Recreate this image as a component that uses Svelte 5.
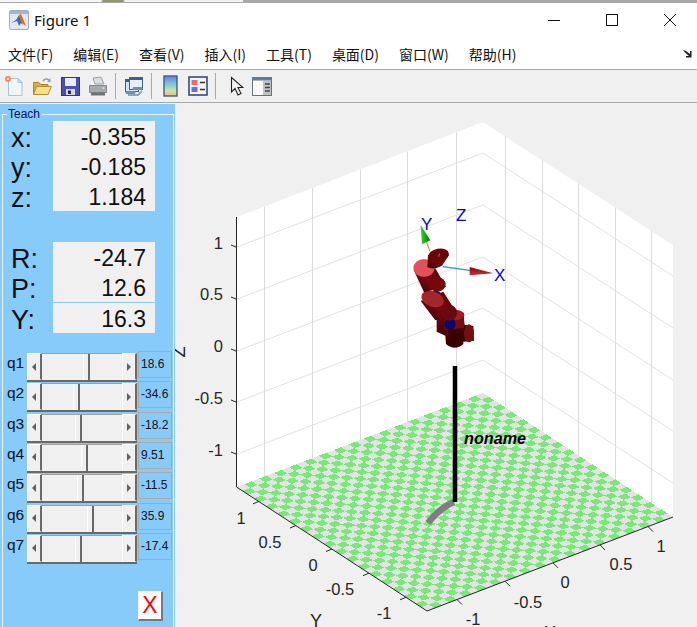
<script>
  const menus = ["文件(F)", "编辑(E)", "查看(V)", "插入(I)", "工具(T)", "桌面(D)", "窗口(W)", "帮助(H)"];

  const position = [
    [["x:", "-0.355"], ["y:", "-0.185"], ["z:", "1.184"]],
    [["R:", "-24.7"], ["P:", "12.6"], ["Y:", "16.3"]],
  ];

  const joints = [
    { name: "q1", value: "18.6", thumb: 41 },
    { name: "q2", value: "-34.6", thumb: 31 },
    { name: "q3", value: "-18.2", thumb: 33 },
    { name: "q4", value: "9.51", thumb: 39 },
    { name: "q5", value: "-11.5", thumb: 35 },
    { name: "q6", value: "35.9", thumb: 45 },
    { name: "q7", value: "-17.4", thumb: 33 },
  ];

  // floor corners, in page pixels
  const back = [483, 393];
  const u = [190, 124];
  const v = [-246, 94];
  const tilesPerSide = 33;

  function floorPoint(i, j) {
    const a = i / tilesPerSide;
    const b = j / tilesPerSide;
    return `${back[0] + u[0] * a + v[0] * b},${back[1] + u[1] * a + v[1] * b}`;
  }

  const greenTiles = [];
  for (let i = 0; i < tilesPerSide; i++) {
    for (let j = 0; j < tilesPerSide; j++) {
      if ((i + j) % 2 === 1) {
        greenTiles.push(
          [floorPoint(i, j), floorPoint(i + 1, j), floorPoint(i + 1, j + 1), floorPoint(i, j + 1)].join(" ")
        );
      }
    }
  }

  const zGrid = [247, 299, 351, 402, 454];
  const xGrid = [264, 312, 360, 407, 456];
  const yGrid = [505, 542, 578, 615, 651];
  const xTicks = [457, 505, 553, 600, 648];
  const yTicks = [259, 296, 332, 369, 406];

  const frontRightEdge = (x) => 611 - ((x - 427) * 94) / 246;
  const frontLeftEdge = (x) => 487 + ((x - 237) * 124) / 190;

  const zLabels = [["1", 249], ["0.5", 300], ["0", 352], ["-0.5", 404], ["-1", 456]];
  const yLabels = [["1", 241, 524], ["0.5", 270, 548], ["0", 313, 571], ["-0.5", 340, 595], ["-1", 384, 619]];
  const xLabels = [["1", 661, 552], ["0.5", 621, 570], ["0", 565, 588], ["-0.5", 528, 608], ["-1", 473, 625]];
</script>

<div class="window">
  <div class="strip"></div>

  <header class="titlebar">
    <svg class="logo" viewBox="0 0 20 20" aria-hidden="true">
      <rect x="0.5" y="0.5" width="19" height="19" rx="1.5" fill="#e4e8ee" stroke="#a8acb2" />
      <rect x="1" y="1" width="18" height="3" fill="#9db5d6" />
      <path d="M2 13 L7 10 L10 5 L14 15 L12 13 L10 16 L8 11 Z" fill="#3a6fb5" />
      <path d="M10 5 L12 4 L17 16 L14 14 L12 11 Z" fill="#e8641e" />
    </svg>
    <span class="title">Figure 1</span>
    <div class="window-buttons">
      <svg width="12" height="12" viewBox="0 0 12 12" aria-hidden="true"><path d="M0 6.5H12" stroke="#111" /></svg>
      <svg width="12" height="12" viewBox="0 0 12 12" aria-hidden="true"><rect x="0.5" y="0.5" width="11" height="11" fill="none" stroke="#111" /></svg>
      <svg width="12" height="12" viewBox="0 0 12 12" aria-hidden="true"><path d="M0 0L12 12M12 0L0 12" stroke="#111" /></svg>
    </div>
  </header>

  <nav class="menubar">
    {#each menus as item}
      <span>{item}</span>
    {/each}
    <svg class="dock" width="9" height="8" viewBox="0 0 9 8" aria-hidden="true">
      <path d="M0 0L3 1L7 4V1L8.5 1V7.5H3L3 6H6L2 2.5Z" fill="#222" />
    </svg>
  </nav>

  <div class="toolbar">
    <svg class="tool" viewBox="0 0 20 22" aria-hidden="true">
      <path d="M4.5 3.5H14L18 7.5V20.5H4.5Z" fill="#eef5fb" stroke="#a9c3d8" />
      <path d="M14 3.5V7.5H18Z" fill="#cfe0ee" stroke="#a9c3d8" />
      <circle cx="4" cy="4" r="3" fill="#ee8a5a" />
      <circle cx="4" cy="4" r="1.2" fill="#ffd9a8" />
    </svg>
    <svg class="tool" viewBox="0 0 20 22" aria-hidden="true">
      <path d="M1.5 7.5H7L9 9.5H16V19.5H1.5Z" fill="#d9ac3a" stroke="#a98428" />
      <path d="M1.5 19.5L4.5 11.5H19.5L16 19.5Z" fill="#f6df8a" stroke="#b5902f" />
      <path d="M11 6C12.5 3.5 15 3.5 17 5" fill="none" stroke="#8aa0b8" stroke-width="1.5" />
      <path d="M18.5 3V7H15Z" fill="#8aa0b8" />
    </svg>
    <svg class="tool" viewBox="0 0 20 22" aria-hidden="true">
      <rect x="1.5" y="2.5" width="18" height="18" fill="#4650ad" stroke="#2f3585" />
      <rect x="5" y="3" width="11" height="8" fill="#e8ecf6" />
      <rect x="6" y="14" width="9" height="6" fill="#d5d8e0" />
      <rect x="8" y="15.5" width="3" height="3.5" fill="#25285a" />
    </svg>
    <svg class="tool" viewBox="0 0 20 22" aria-hidden="true">
      <path d="M5 3L13 2L16 9H7Z" fill="#d8dde2" stroke="#9ba2a8" />
      <path d="M1.5 10.5H18.5V17.5H1.5Z" fill="#a6aaad" stroke="#85898c" />
      <path d="M3 17.5H17V20.5H3Z" fill="#6f7375" />
      <circle cx="15.5" cy="13" r="1" fill="#ddd" />
    </svg>
    <i class="sep"></i>
    <svg class="tool" viewBox="0 0 20 22" aria-hidden="true">
      <rect x="1.5" y="4.5" width="13" height="12" fill="#d6e2ee" stroke="#3c5f8c" />
      <rect x="1.5" y="4.5" width="13" height="2.5" fill="#3c5f8c" />
      <rect x="5.5" y="2.5" width="13" height="12" fill="#e8eef5" stroke="#3c5f8c" />
      <rect x="5.5" y="2.5" width="13" height="2.5" fill="#3c5f8c" />
      <path d="M3 17.5H10M10 13.5H17" stroke="#6c8fb5" stroke-width="3" stroke-linecap="round" />
      <path d="M4 20H14L18 16" stroke="#8aa5c2" stroke-width="2" fill="none" />
    </svg>
    <i class="sep"></i>
    <svg class="tool narrow" viewBox="0 0 15 22" aria-hidden="true">
      <defs>
        <linearGradient id="bar" x1="0" y1="0" x2="0" y2="1">
          <stop offset="0" stop-color="#6d7fd8" />
          <stop offset="0.45" stop-color="#7fd0d8" />
          <stop offset="0.75" stop-color="#cfe69a" />
          <stop offset="1" stop-color="#f0b56c" />
        </linearGradient>
      </defs>
      <rect x="1" y="1" width="13" height="20" fill="url(#bar)" stroke="#3f5f86" stroke-width="1.4" />
    </svg>
    <svg class="tool" viewBox="0 0 20 22" aria-hidden="true">
      <rect x="1" y="2" width="18" height="18" fill="#f2f4f8" stroke="#2f4e7a" stroke-width="1.6" />
      <rect x="3.5" y="5" width="6" height="5" fill="#ee6a6e" />
      <rect x="3.5" y="12" width="6" height="5" fill="#6a6af0" />
      <path d="M12 7.5H17M12 14.5H17" stroke="#333" stroke-width="1.4" />
    </svg>
    <i class="sep"></i>
    <svg class="tool pointer" viewBox="0 0 14 22" aria-hidden="true">
      <path d="M1.5 2.5V17L5 13.5L8 20L11 18.5L8 12.5H13Z" fill="#f4f4f4" stroke="#222" stroke-width="1.1" />
    </svg>
    <svg class="tool" viewBox="0 0 20 22" aria-hidden="true">
      <rect x="0.5" y="2.5" width="19" height="18" fill="#ecedee" stroke="#6a7278" />
      <rect x="0.5" y="2.5" width="19" height="3" fill="#5f7f9c" />
      <rect x="1" y="6" width="10" height="14" fill="#fafafa" />
      <rect x="11" y="6" width="8" height="14" fill="#bfc2c4" />
      <path d="M13 9H18M13 12.5H18M13 16H18" stroke="#444" stroke-width="1.4" />
    </svg>
  </div>

  <main class="figure">
    <aside class="side">
      <fieldset class="teach">
        <legend>Teach</legend>

        {#each position as group}
          <div class="readout">
            {#each group as [label, val]}
              <div class="readout-row">
                <span class="readout-label">{label}</span>
                <span class="readout-value">{val}</span>
              </div>
            {/each}
          </div>
        {/each}

        <div class="joints">
          {#each joints as joint}
            <div class="joint">
              <span class="joint-name">{joint.name}</span>
              <div class="scroll">
                <span class="scroll-btn"><i class="arrow-left"></i></span>
                <div class="scroll-track">
                  <span class="scroll-thumb" style="margin-left: {joint.thumb}px"></span>
                </div>
                <span class="scroll-btn"><i class="arrow-right"></i></span>
              </div>
              <span class="joint-value">{joint.value}</span>
            </div>
          {/each}
        </div>

        <button class="quit" type="button">X</button>
      </fieldset>
    </aside>

    <svg class="plot" viewBox="175 104 522 523" aria-label="Robot arm plot">
      <defs>
        <linearGradient id="cone" x1="0" y1="0" x2="0" y2="1">
          <stop offset="0" stop-color="#7d0c10" />
          <stop offset="1" stop-color="#e0262c" />
        </linearGradient>
        <linearGradient id="gcone" x1="0" y1="0" x2="1" y2="0">
          <stop offset="0" stop-color="#30e020" />
          <stop offset="1" stop-color="#067006" />
        </linearGradient>
        <linearGradient id="limb" x1="0" y1="1" x2="1" y2="0">
          <stop offset="0" stop-color="#300000" />
          <stop offset="0.5" stop-color="#7a0a0f" />
          <stop offset="1" stop-color="#4c0204" />
        </linearGradient>
        <linearGradient id="wrist" x1="0" y1="0" x2="1" y2="1">
          <stop offset="0" stop-color="#6a070b" />
          <stop offset="0.6" stop-color="#380000" />
          <stop offset="1" stop-color="#480102" />
        </linearGradient>
      </defs>

      <polygon points="237,217 483,122 673,245 673,517 483,393 237,487" fill="#fff" />

      {#each zGrid as y}
        <polyline points="237,{y} 483,{y - 94} 673,{y + 29}" fill="none" stroke="#e2e2e2" />
      {/each}
      {#each xGrid as x}
        <line x1={x + 0.5} x2={x + 0.5} y1={217 - ((x - 237) * 95) / 246} y2={487 - ((x - 237) * 94) / 246} stroke="#dcdcdc" />
      {/each}
      {#each yGrid as x}
        <line x1={x + 0.5} x2={x + 0.5} y1={122 + ((x - 483) * 123) / 190} y2={393 + ((x - 483) * 124) / 190} stroke="#dcdcdc" />
      {/each}

      <polygon points="483,393 673,517 427,611 237,487" fill="#e3e3e3" shape-rendering="crispEdges" />
      {#each greenTiles as points}
        <polygon {points} fill="#78e878" shape-rendering="crispEdges" />
      {/each}

      <path d="M236.5 217V487L427 611L673 517" fill="none" stroke="#262626" />
      {#each zGrid as y}
        <line x1="231" y1={y - 2} x2="236" y2={y} stroke="#262626" />
      {/each}
      {#each xTicks as x}
        <line x1={x} y1={frontRightEdge(x)} x2={x + 5} y2={frontRightEdge(x) + 5} stroke="#262626" />
      {/each}
      {#each yTicks as x}
        <line x1={x} y1={frontLeftEdge(x)} x2={x - 6} y2={frontLeftEdge(x) + 2.5} stroke="#262626" />
      {/each}

      {#each zLabels as [t, y]}
        <text class="tick" x="223" {y} text-anchor="end">{t}</text>
      {/each}
      {#each yLabels as [t, x, y]}
        <text class="tick" {x} {y} text-anchor="middle">{t}</text>
      {/each}
      {#each xLabels as [t, x, y]}
        <text class="tick" {x} {y} text-anchor="middle">{t}</text>
      {/each}
      <text class="axis-name" x="316" y="627" text-anchor="middle">Y</text>
      <text class="axis-name" x="550" y="639" text-anchor="middle">X</text>
      <text class="axis-name" transform="translate(185 352) rotate(-90)" text-anchor="middle">Z</text>

      <!-- pole and base -->
      <path d="M454 502C444 506 436 513 428 523" fill="none" stroke="#7e7e7e" stroke-width="6.5" />
      <line x1="455" y1="366" x2="455" y2="502" stroke="#000" stroke-width="4.5" />
      <text class="robot-name" x="464" y="444">noname</text>

      <!-- arm, sketched in a 3x frame -->
      <g transform="translate(400 205) scale(0.3333)">
        <line x1="90" y1="140" x2="64" y2="65" stroke="#e07a3a" stroke-width="3" />
        <polygon points="62,60 91,106 66,118" fill="url(#gcone)" />
        <line x1="128" y1="185" x2="215" y2="197" stroke="#2f8fd6" stroke-width="3.5" />
        <polygon points="280,205 209,186 209,211" fill="url(#cone)" />

        <!-- wrist -->
        <path d="M110 342 L190 326 L194 360 L220 363 L222 407 L190 410 L190 417 Q165 440 138 417 L136 392 L110 380 Z" fill="url(#wrist)" />
        <ellipse cx="207" cy="385" rx="15" ry="27" fill="#7a0d10" />
        <path d="M133 330 L192 323 L192 368 L133 376 Z" fill="#7c0a0f" />
        <ellipse cx="165" cy="330" rx="28" ry="16" fill="#a81a20" />
        <ellipse cx="150" cy="357" rx="17" ry="18" fill="#08086e" />

        <!-- forearm -->
        <ellipse cx="105" cy="272" rx="20" ry="15" fill="#08086e" />
        <path d="M62 288 L106 346 L172 326 L130 260 Z" fill="url(#limb)" />
        <ellipse cx="98" cy="282" rx="35" ry="23" transform="rotate(20 98 282)" fill="#a3262c" />
        <ellipse cx="147" cy="323" rx="24" ry="24" fill="#6a0a0c" />

        <!-- upper arm -->
        <path d="M41 195 L72 262 L138 246 L106 190 Z" fill="url(#limb)" />
        <ellipse cx="112" cy="238" rx="25" ry="22" fill="#74090c" />
        <ellipse cx="72" cy="189" rx="32" ry="27" fill="#e2505a" />

        <!-- top link -->
        <path d="M84 150 L82 186 Q100 196 126 182 L147 150 Z" fill="url(#limb)" />
        <ellipse cx="116" cy="150" rx="31" ry="19" transform="rotate(-10 116 150)" fill="#6a060a" />
        <line x1="116" y1="155" x2="119" y2="146" stroke="#e8b030" stroke-width="2" />
      </g>

      <text class="frame-label" x="421" y="230">Y</text>
      <text class="frame-label" x="456" y="221">Z</text>
      <text class="frame-label" x="494" y="281">X</text>
    </svg>
  </main>
</div>

<style>
  :global(body) {
    margin: 0;
    background: #f0f0f0;
  }

  .window {
    width: 697px;
    height: 627px;
    overflow: hidden;
    display: flex;
    flex-direction: column;
    font-family: "Liberation Sans", Arial, sans-serif;
  }

  .strip {
    height: 3px;
    box-sizing: border-box;
    border-bottom: 1px solid #a8a8a8;
    background: linear-gradient(
      to right,
      #f6f6f6 0 101px,
      #8c9a6c 103px 123px,
      #f2f2f2 125px 243px,
      #a8a8a8 243px
    );
    flex: none;
  }

  .titlebar {
    height: 33px;
    flex: none;
    background: #fff;
    display: flex;
    align-items: center;
    padding-left: 9px;
  }

  .logo {
    width: 20px;
    height: 20px;
  }

  .title {
    margin-left: 5px;
    font: 15px "Noto Sans", sans-serif;
    color: #111;
  }

  .window-buttons {
    margin-left: auto;
    display: flex;
    gap: 46px;
    padding-right: 21px;
  }

  .menubar {
    height: 34px;
    flex: none;
    box-sizing: border-box;
    background: #fff;
    border-bottom: 1px solid #a9a9a9;
    display: flex;
    align-items: center;
    gap: 20px;
    padding: 2px 0 0 8px;
    font: 14px "Noto Sans CJK SC", "Noto Sans", sans-serif;
    color: #111;
  }

  .dock {
    margin-left: auto;
    margin-right: 5px;
  }

  .toolbar {
    height: 33px;
    flex: none;
    box-sizing: border-box;
    background: #f0f0f0;
    border-bottom: 1px solid #a9a9a9;
    display: flex;
    align-items: center;
    padding-left: 4px;
    gap: 8px;
  }

  .tool {
    width: 20px;
    height: 22px;
    flex: none;
  }

  .narrow {
    width: 15px;
    margin-left: 3px;
    margin-right: 2px;
  }

  .pointer {
    width: 14px;
    margin-left: 6px;
  }

  .sep {
    width: 1px;
    height: 26px;
    margin-left: -1px;
    background: #a9a9a9;
    flex: none;
  }

  .figure {
    flex: 1;
    min-height: 0;
    display: flex;
    margin-top: 1px;
    background: #f0f0f0;
  }

  .side {
    width: 175px;
    flex: none;
    box-sizing: border-box;
    background: #87cbfb;
    padding: 3px 0 0 2px;
  }

  .plot {
    width: 522px;
    height: 523px;
    flex: none;
    overflow: hidden;
    display: block;
  }

  .teach {
    margin: 0;
    padding: 0;
    width: 172px;
    height: 540px;
    box-sizing: border-box;
    border: 1px solid #e8f4fc;
    min-inline-size: 0;
  }

  legend {
    margin-left: 4px;
    padding: 0 2px 0 1px;
    font-size: 12px;
    line-height: 14px;
    color: #10104a;
  }

  .readout {
    margin: 0 0 31px 0;
  }

  .readout-row {
    display: flex;
    height: 30px;
    align-items: center;
  }

  .readout + .readout .readout-row:last-child {
    height: 31px;
  }

  .readout-label {
    width: 50px;
    box-sizing: border-box;
    padding: 5px 0 0 8px;
    font-size: 27px;
    color: #111;
  }

  .readout-value {
    width: 102px;
    height: 100%;
    box-sizing: border-box;
    background: #f0f0f0;
    text-align: right;
    padding-right: 9px;
    font-size: 23px;
    line-height: 32px;
    color: #111;
  }

  .readout + .readout .readout-row:last-child .readout-value {
    border-top: 1px solid #87cbfb;
  }

  .joints {
    display: flex;
    flex-direction: column;
    gap: 1.33px;
    margin-top: -11px;
  }

  .joint {
    display: flex;
    height: 29px;
  }

  .joint-name {
    width: 24px;
    flex: none;
    box-sizing: border-box;
    padding-left: 4px;
    font-size: 15.5px;
    line-height: 20px;
    color: #111;
  }

  .scroll {
    width: 110px;
    height: 29px;
    flex: none;
    display: flex;
    box-sizing: border-box;
    border-bottom: 2px solid #696969;
    background: #f0f0f0;
  }

  .scroll-btn {
    width: 15px;
    height: 27px;
    flex: none;
    box-sizing: border-box;
    background: #f0f0f0;
    border: 1px solid;
    border-color: #fff #696969 transparent #fff;
    border-right-width: 2px;
    display: flex;
    align-items: center;
    justify-content: center;
  }

  .arrow-left,
  .arrow-right {
    width: 0;
    height: 0;
    border-top: 4px solid transparent;
    border-bottom: 4px solid transparent;
  }

  .arrow-left {
    border-right: 4px solid #606060;
  }

  .arrow-right {
    border-left: 4px solid #606060;
  }

  .scroll-track {
    flex: 1;
    border-top: 1px solid #a0a0a0;
  }

  .scroll-thumb {
    display: block;
    width: 7px;
    height: 26px;
    box-sizing: border-box;
    background: #f0f0f0;
    border-left: 1px solid #fff;
    border-right: 2px solid #696969;
  }

  .joint-value {
    width: 34px;
    height: 27px;
    flex: none;
    margin: -2px 0 0 1px;
    box-sizing: border-box;
    border: 1px solid #a9a9a9;
    padding-left: 2px;
    font-size: 12px;
    line-height: 25px;
    color: #111;
  }

  .quit {
    display: block;
    margin: 27px 0 0 135px;
    width: 25px;
    height: 30px;
    padding: 0;
    background: #fff;
    border: 1px solid;
    border-color: #f0f0f0 #7a7a7a #7a7a7a #f0f0f0;
    border-width: 1px 2px 2px 1px;
    color: #f00;
    font: 23px "Liberation Sans", sans-serif;
  }

  .tick {
    font-size: 16.5px;
    fill: #262626;
  }

  .axis-name {
    font-size: 18px;
    fill: #262626;
  }

  .robot-name {
    font-size: 16.2px;
    font-weight: bold;
    font-style: italic;
    fill: #000;
  }

  .frame-label {
    font-size: 17px;
    fill: #0000ff;
  }
</style>
